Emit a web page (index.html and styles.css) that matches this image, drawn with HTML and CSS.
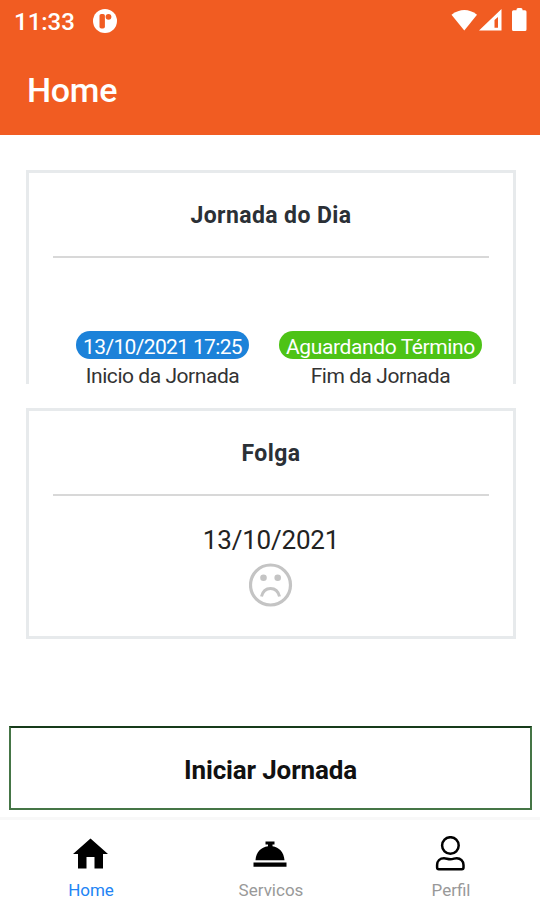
FILE: index.html
```html
<!DOCTYPE html>
<html lang="pt-BR">
<head>
<meta charset="utf-8">
<meta name="viewport" content="width=device-width, initial-scale=1">
<title>Home</title>
<link rel="stylesheet" href="styles.css">
</head>
<body>
<div class="screen">
  <header class="header">
    <div class="status">
      <span class="clock">11:33</span>
      <svg class="status-app" width="24" height="24" viewBox="0 0 24 24"><circle cx="12" cy="12" r="12" fill="#fff"/><rect x="6.500" y="5" width="5.400" height="14.500" rx="1.800" fill="#f15c22"/><circle cx="15.500" cy="7.800" r="2.900" fill="#f15c22"/></svg>
      <svg class="status-icons" width="76" height="24" viewBox="0 0 76 24" fill="#fff"><path d="M0.500 5.700Q13.500-3.600 26 5.700L13.300 21.600Z"/><path fill-rule="evenodd" d="M28 21.600L50.500 0V21.600ZM43.500 11V18.800H47V8Z"/><path d="M65.500 0.500Q65.500-1 67-1H70Q71.500 -1 71.500 0.500V1.300H74Q75.500 1.300 75.500 2.800V20.500Q75.500 22 74 22H62.500Q61 22 61 20.500V2.800Q61 1.300 62.500 1.300H65.500Z"/></svg>
    </div>
    <h1 class="title">Home</h1>
  </header>
  <main class="content">
    <section class="card card-day">
      <h2 class="card-title">Jornada do Dia</h2>
      <div class="columns">
        <div class="column"><span class="pill blue">13/10/2021 17:25</span><span class="caption">Inicio da Jornada</span></div>
        <div class="column"><span class="pill green">Aguardando Término</span><span class="caption">Fim da Jornada</span></div>
      </div>
    </section>
    <section class="card card-off">
      <h2 class="card-title">Folga</h2>
      <p class="date">13/10/2021</p>
      <svg class="sad" width="44" height="44" viewBox="0 0 44 44"><circle cx="21.500" cy="22" r="20" fill="none" stroke="#c4c4c4" stroke-width="3.200"/><circle cx="14.500" cy="14.800" r="3.300" fill="#c4c4c4"/><circle cx="28.700" cy="14.800" r="3.300" fill="#c4c4c4"/><path d="M12.500 33.500Q14.500 25.500 21.500 25.500T30.500 33.500" fill="none" stroke="#c4c4c4" stroke-width="3"/></svg>
    </section>
    <button class="start">Iniciar Jornada</button>
  </main>
  <nav class="tabs">
    <a class="tab active"><svg width="36" height="36" viewBox="0 0 36 36"><path d="M18.500 2.500L36 18H31V32.500H22.500V21H14.500V32.500H6V18H1Z"/></svg><span>Home</span></a>
    <a class="tab"><svg width="36" height="36" viewBox="0 0 36 36"><path d="M13.500 5.500H22.500V8.500H20.500V10.300C27 11 32 16.500 32.500 24.300H3.500C4 16.500 9 11 16 10.300V8.500H13.500ZM1.500 26.500H34.500V30.800H1.500Z"/></svg><span>Servicos</span></a>
    <a class="tab"><svg width="36" height="36" viewBox="0 0 36 36" fill="none" stroke="#000" stroke-width="2.500"><circle cx="18.400" cy="9.500" r="8.300"/><path d="M12 22.200C14.500 22.200 15.500 23.200 18.400 23.200S22.500 22.200 24.800 22.200C28.500 22.200 31.500 25 31.500 29V31.500Q31.500 33.200 29.800 33.200H6.800Q5.100 33.200 5.100 31.500V29C5.100 25 8 22.200 12 22.200Z"/></svg><span>Perfil</span></a>
  </nav>
</div>
</body>
</html>
```
FILE: styles.css
```css
* { box-sizing: border-box; }
body { margin: 0; font-family: Roboto, sans-serif; background: #fff; color: #000; }
h1, h2, p { margin: 0; }
svg { display: block; flex: none; }
.screen { width: 540px; height: 900px; display: flex; flex-direction: column; overflow: hidden; }
.header { height: 135px; flex: none; background: #f15c22; color: #fff; }
.status { height: 42px; display: flex; align-items: center; padding: 0 13px 0 14px; }
.clock { width: 79px; font-size: 24px; line-height: 28px; padding-top: 1px; font-weight: 500; }
.status-icons { margin-left: auto; overflow: visible; }
.title { padding: 28px 0 0 27px; font-size: 34px; line-height: 40px; font-weight: 500; letter-spacing: -.3px; }
.content { flex: 1; padding: 35px 8px 0 9px; display: flex; flex-direction: column; }
.card { margin: 0 16px 0 17px; padding: 0 24px; border: 3px solid #e7eaec; display: flex; flex-direction: column; align-items: center; flex: none; }
.card-day { height: 214px; border-bottom: 0; }
.card-off { height: 231px; margin-top: 24px; }
.card-title { align-self: stretch; height: 85px; border-bottom: 2px solid #d8d8d8; text-align: center; font-size: 23px; line-height: 85px; font-weight: 700; color: #2b3036; letter-spacing: .4px; }
.columns { display: flex; align-self: stretch; justify-content: center; gap: 30px; padding-top: 73px; margin-right: -16px; }
.column { display: flex; flex-direction: column; align-items: center; white-space: nowrap; }
.pill { height: 28px; padding: 0 7px; border-radius: 14px; font-size: 21px; line-height: 32px; color: #fff; }
.blue { background: #1c82d9; letter-spacing: -.65px; }
.green { background: #4dc316; letter-spacing: -.38px; }
.caption { font-size: 21px; line-height: 26px; padding-top: 4px; color: #333; letter-spacing: -.45px; }
.date { padding-top: 27px; font-size: 26px; line-height: 34px; color: #222; letter-spacing: -.2px; }
.sad { margin-top: 6px; }
.start { margin-top: 87px; height: 84px; flex: none; padding: 4px 0 0; border: 2px solid #457546; border-top-color: #173b1a; background: #fff; color: #111; font: 700 26px Roboto, sans-serif; letter-spacing: -.15px; }
.tabs { height: 83px; flex: none; border-top: 3px solid #f8f8f8; display: grid; grid-template-columns: repeat(3, 1fr); }
.tab { display: flex; flex-direction: column; align-items: center; padding-top: 16px; font-size: 17px; line-height: 20px; color: #999; }
.tab span { padding: 8px 0 0 2px; }
.active { color: #2284f5; }
```
